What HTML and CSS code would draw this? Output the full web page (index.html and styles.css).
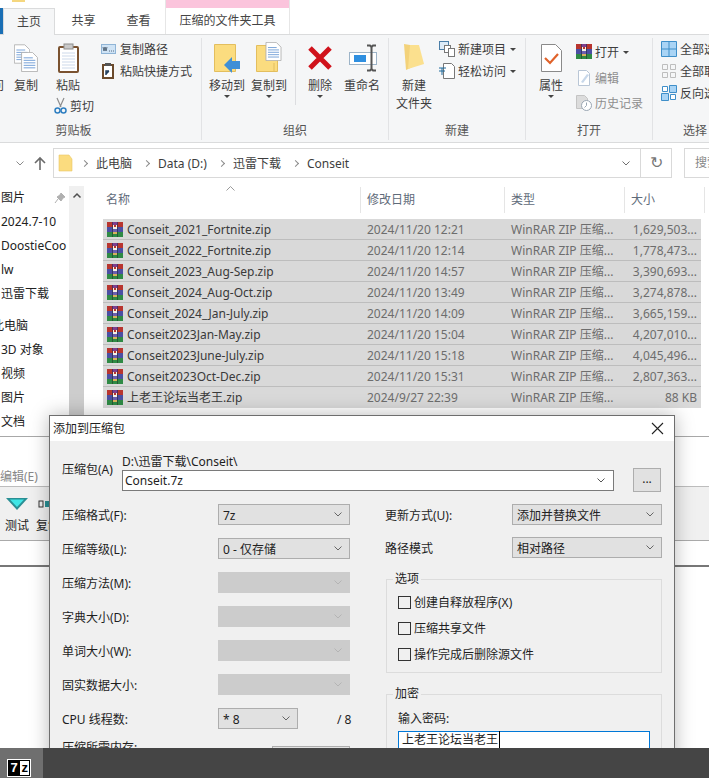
FILE: index.html
```html
<!DOCTYPE html>
<html lang="zh-CN">
<head>
    <meta charset="UTF-8">
    <title>添加到压缩包</title>
    <link rel="stylesheet" href="styles.css">
</head>
<body>
    <svg class="defs" width="0" height="0">
        <symbol id="rar" viewBox="0 0 16 16">
            <rect x="0" y="0" width="16" height="5" fill="#b8352f"/>
            <rect x="0" y="5" width="16" height="5" fill="#4b4fa3"/>
            <rect x="0" y="10" width="16" height="5" fill="#2f8a45"/>
            <rect x="5" y="0" width="6" height="3" fill="#7d3f8f"/>
            <rect x="5" y="0" width="1" height="15" fill="#1d1d1d" opacity=".45"/>
            <rect x="10" y="0" width="1" height="15" fill="#1d1d1d" opacity=".45"/>
            <path d="M6 3h1v2h2V3h1v4H6z" fill="#f6f1e4"/>
            <rect x="6" y="7" width="4" height="3" fill="#6a5fb0"/>
            <rect x="6" y="10" width="4" height="2" fill="#d9b15c"/>
        </symbol>
        <symbol id="page" viewBox="0 0 20 24">
            <path d="M.5.5h13l6 6v17H.5z" fill="#fff" stroke="#a9a9a9"/>
            <path d="M3 7h11M3 10h14M3 13h14M3 16h14M3 19h14" stroke="#5b8fd0"/>
        </symbol>
        <symbol id="chev" viewBox="0 0 8 5">
            <path d="M.5.5 4 4 7.500.5" fill="none" stroke="currentColor"/>
        </symbol>
    </svg>

    <div class="explorer">
        <div class="tabs">
            <div class="qat"></div>
            <div class="tab-file"></div>
            <div class="tab tab-active">主页</div>
            <div class="tab">共享</div>
            <div class="tab">查看</div>
            <div class="tab-context">
                <div class="tab-stripe"></div>
                <div class="tab-label">压缩的文件夹工具</div>
            </div>
        </div>

        <div class="ribbon">
            <div class="rb-group g-clip">
                <div class="rb-body">
                    <div class="big big-cut">
                        <div class="big-icon"></div>
                        <span>访问</span>
                    </div>
                    <div class="big big-copy">
                        <div class="big-icon">
                            <svg width="24" height="28" viewBox="0 0 24 28">
                                <use href="#page" x="0" y="0" width="16" height="20"/>
                                <use href="#page" x="7" y="8" width="17" height="20"/>
                            </svg>
                        </div>
                        <span>复制</span>
                    </div>
                    <div class="paste-col">
                        <div class="big big-paste">
                            <div class="big-icon">
                                <svg width="21" height="29" viewBox="0 0 21 29">
                                    <rect x="1" y="3" width="19" height="25" rx="1" fill="#fff" stroke="#7a5230" stroke-width="2"/>
                                    <rect x="6" y="0" width="9" height="5" fill="#c9c9c9" stroke="#8e8e8e"/>
                                    <path d="M4 9h13M4 12h13M4 15h13M4 18h13M4 21h13M4 24h13" stroke="#cdd9ea"/>
                                </svg>
                            </div>
                            <span>粘贴</span>
                        </div>
                        <div class="small">
                            <svg width="13" height="16" viewBox="0 0 13 16">
                                <path d="M3 0l4 9M10 0 6 9" stroke="#8d8d8d" stroke-width="1.200" fill="none"/>
                                <circle cx="3.500" cy="12.500" r="2.500" fill="none" stroke="#2f7fc1" stroke-width="1.500"/>
                                <circle cx="9.500" cy="12.500" r="2.500" fill="none" stroke="#2f7fc1" stroke-width="1.500"/>
                            </svg>
                            <span>剪切</span>
                        </div>
                    </div>
                    <div class="small-col small-col-a">
                        <div class="small">
                            <svg width="15" height="10" viewBox="0 0 15 10">
                                <rect x=".5" y=".5" width="14" height="9" fill="#cfe3f5" stroke="#8fb4d6"/>
                                <path d="M2 3l1 4 1-4 1 4 1-4M8 7h1M10 7h1M12 7h1" stroke="#3a4c60" fill="none" stroke-width=".8"/>
                            </svg>
                            <span>复制路径</span>
                        </div>
                        <div class="small">
                            <svg width="15" height="16" viewBox="0 0 15 16">
                                <rect x="2" y="2" width="10" height="13" fill="#fff" stroke="#6b4a2c" stroke-width="2"/>
                                <rect x="4" y="0" width="6" height="3" fill="#555"/>
                                <path d="M5 12V8h3M8 8l-3 3" stroke="#23405f" stroke-width="1.500" fill="none"/>
                            </svg>
                            <span>粘贴快捷方式</span>
                        </div>
                    </div>
                </div>
                <div class="rb-title">剪贴板</div>
            </div>

            <div class="rb-group g-org">
                <div class="rb-body">
                    <div class="big big-move">
                        <div class="big-icon">
                            <svg width="27" height="29" viewBox="0 0 27 29">
                                <path d="M.5.500h21v27H.5z" fill="#fbdc7f" stroke="#e3be5e"/>
                                <path d="M10 21l8-8v4h8v8h-8v4z" fill="#3f8fd6"/>
                            </svg>
                        </div>
                        <span>移动到</span>
                        <i class="caret"></i>
                    </div>
                    <div class="big big-copyto">
                        <div class="big-icon">
                            <svg width="27" height="28" viewBox="0 0 27 28">
                                <path d="M.5 1.500h21v26H.5z" fill="#fbdc7f" stroke="#e3be5e"/>
                                <path d="M18 19v8" stroke="#e3be5e"/>
                                <use href="#page" x="9" y="-2" width="17" height="19"/>
                            </svg>
                        </div>
                        <span>复制到</span>
                        <i class="caret"></i>
                    </div>
                    <div class="rb-sep"></div>
                    <div class="big big-del">
                        <div class="big-icon">
                            <svg width="26" height="26" viewBox="0 0 26 26">
                                <path d="M3 4l20 20M23 4 3 24" stroke="#d0121b" stroke-width="5"/>
                            </svg>
                        </div>
                        <span>删除</span>
                        <i class="caret"></i>
                    </div>
                    <div class="big big-ren">
                        <div class="big-icon">
                            <svg width="30" height="27" viewBox="0 0 30 27">
                                <rect x="2.500" y="8.500" width="27" height="12" fill="#fff" stroke="#9db4c8"/>
                                <rect x="7" y="11" width="12" height="7" fill="#2f8fe0"/>
                                <path d="M20 1.500h3l1.500 1.500 1.500-1.500h3M20 26.500h3l1.500-1.500 1.500 1.500h3M24.500 3v22" stroke="#555" stroke-width="2" fill="none"/>
                            </svg>
                        </div>
                        <span>重命名</span>
                    </div>
                </div>
                <div class="rb-title">组织</div>
            </div>

            <div class="rb-group g-new">
                <div class="rb-body">
                    <div class="big big-folder">
                        <div class="big-icon">
                            <svg width="20" height="27" viewBox="0 0 20 27">
                                <path d="M0 0l12 2 3 4v14l-13 6z" fill="#f3d27a"/>
                                <path d="M6 1h9l5 19-16 5z" fill="#fbe08e"/>
                            </svg>
                        </div>
                        <span>新建</span>
                        <span>文件夹</span>
                    </div>
                    <div class="small-col small-col-c">
                        <div class="small">
                            <svg width="16" height="16" viewBox="0 0 16 16">
                                <rect x=".5" y=".5" width="9" height="8" fill="#dcebf8" stroke="#4a7ea8"/>
                                <rect x="5.500" y="4.500" width="6" height="7" fill="#fff" stroke="#777"/>
                                <rect x="9.500" y="7.500" width="6" height="8" fill="#fff" stroke="#777"/>
                            </svg>
                            <span>新建项目</span>
                            <i class="caret caret-side"></i>
                        </div>
                        <div class="small">
                            <svg width="16" height="16" viewBox="0 0 16 16">
                                <path d="M4.500.5h8l3 3v12h-11z" fill="#fff" stroke="#777"/>
                                <path d="M0 5h7M0 8h6M3 5v7" stroke="#1f6a9c" fill="none"/>
                            </svg>
                            <span>轻松访问</span>
                            <i class="caret caret-side"></i>
                        </div>
                    </div>
                </div>
                <div class="rb-title">新建</div>
            </div>

            <div class="rb-group g-open">
                <div class="rb-body">
                    <div class="big big-prop">
                        <div class="big-icon">
                            <svg width="21" height="28" viewBox="0 0 21 28">
                                <path d="M.5.500h14l6 6v21H.5z" fill="#fff" stroke="#8a8a8a"/>
                                <path d="M4 14l5 5 8-9" fill="none" stroke="#e0622a" stroke-width="2.200"/>
                            </svg>
                        </div>
                        <span>属性</span>
                        <i class="caret"></i>
                    </div>
                    <div class="small-col small-col-d">
                        <div class="small">
                            <svg width="16" height="16"><use href="#rar"/></svg>
                            <span>打开</span>
                            <i class="caret caret-side"></i>
                        </div>
                        <div class="small small-off">
                            <svg width="16" height="16" viewBox="0 0 16 16">
                                <path d="M2.500.5h8l3 3v12h-11z" fill="#fff" stroke="#b9c6d6"/>
                                <path d="M5 12l6-8 2 1-6 8z" fill="#c8d8ea"/>
                            </svg>
                            <span>编辑</span>
                        </div>
                        <div class="small small-off">
                            <svg width="16" height="16" viewBox="0 0 16 16">
                                <path d="M.5.5h8l3 3v10h-11z" fill="#dcdcdc" stroke="#c4c4c4"/>
                                <circle cx="10.500" cy="10.500" r="5" fill="#fff" stroke="#9aa6b3"/>
                                <path d="M10.500 7.500v3l-2 2" stroke="#9aa6b3" fill="none"/>
                            </svg>
                            <span>历史记录</span>
                        </div>
                    </div>
                </div>
                <div class="rb-title">打开</div>
            </div>

            <div class="rb-group g-sel">
                <div class="rb-body">
                    <div class="small-col small-col-e">
                        <div class="small">
                            <svg width="16" height="16" viewBox="0 0 16 16">
                                <path d="M.5.5h15v15H.5zM8 0v16M0 8h16" fill="#a9d4f5" stroke="#3f8fc9"/>
                            </svg>
                            <span>全部选择</span>
                        </div>
                        <div class="small">
                            <svg width="16" height="16" viewBox="0 0 16 16">
                                <path d="M1.500 1.500h5v5h-5zM9.500 1.500h5v5h-5zM1.500 9.500h5v5h-5zM9.500 9.500h5v5h-5z" fill="none" stroke="#bdbdbd"/>
                            </svg>
                            <span>全部取消</span>
                        </div>
                        <div class="small">
                            <svg width="16" height="16" viewBox="0 0 16 16">
                                <path d="M8.500.5h7v7h-7zM.5 8.500h7v7h-7z" fill="#a9d4f5" stroke="#3f8fc9"/>
                                <path d="M1.500 1.500h5v5h-5zM9.500 9.500h5v5h-5z" fill="#fff" stroke="#3f8fc9"/>
                            </svg>
                            <span>反向选择</span>
                        </div>
                    </div>
                </div>
                <div class="rb-title">选择</div>
            </div>
        </div>

        <div class="address">
            <div class="nav">
                <svg class="nav-down" width="8" height="5" color="#8a8a8a"><use href="#chev"/></svg>
                <svg width="12" height="13" viewBox="0 0 12 13">
                    <path d="M6 13V1M1 6l5-5 5 5" fill="none" stroke="#6b6b6b" stroke-width="1.600"/>
                </svg>
            </div>
            <div class="addr-box">
                <svg class="addr-folder" width="13" height="16" viewBox="0 0 13 16">
                    <path d="M0 0h10l3 4v12H0z" fill="#fbdc7f" stroke="#e9c867" stroke-width=".6"/>
                </svg>
                <span class="crumb-sep"></span><span class="crumb">此电脑</span>
                <span class="crumb-sep"></span><span class="crumb">Data (D:)</span>
                <span class="crumb-sep"></span><span class="crumb">迅雷下载</span>
                <span class="crumb-sep"></span><span class="crumb">Conseit</span>
                <div class="addr-drop">
                    <svg width="8" height="5" color="#6f6f6f"><use href="#chev"/></svg>
                </div>
                <div class="addr-refresh">↻</div>
            </div>
            <div class="search-box">搜索</div>
        </div>

        <div class="main">
            <div class="sidebar">
                <div class="side-item">图片</div>
                <div class="side-item">2024.7-10</div>
                <div class="side-item">DoostieCoo</div>
                <div class="side-item">lw</div>
                <div class="side-item">迅雷下载</div>
                <div class="side-gap"></div>
                <div class="side-item side-cut">此电脑</div>
                <div class="side-item">3D 对象</div>
                <div class="side-item">视频</div>
                <div class="side-item">图片</div>
                <div class="side-item">文档</div>
                <svg class="pin" width="10" height="10" viewBox="0 0 10 10">
                    <path d="M6 0l4 4-2 1-2 3-4-4 3-2zM3 6 0 10" fill="#b0b0b0" stroke="#b0b0b0"/>
                </svg>
            </div>
            <div class="side-scroll">
                <div class="scroll-top">
                    <svg width="8" height="5" viewBox="0 0 8 5" color="#505050"><path d="M.5 4.500 4 1l3.500 3.500" fill="none" stroke="currentColor" stroke-width="1.500"/></svg>
                </div>
                <div class="scroll-thumb"></div>
            </div>
            <div class="files">
                <svg class="sort-mark" width="9" height="5" viewBox="0 0 9 5"><path d="M.5 4.500 4.500.5l4 4" fill="none" stroke="#9a9a9a"/></svg>
                <div class="file-head">
                    <div>名称</div>
                    <div>修改日期</div>
                    <div>类型</div>
                    <div>大小</div>
                </div>
                <div class="file-row"><div class="f-name"><svg width="16" height="16"><use href="#rar"/></svg>Conseit_2021_Fortnite.zip</div><div>2024/11/20 12:21</div><div>WinRAR ZIP 压缩...</div><div class="f-size">1,629,503...</div></div>
                <div class="file-row"><div class="f-name"><svg width="16" height="16"><use href="#rar"/></svg>Conseit_2022_Fortnite.zip</div><div>2024/11/20 12:14</div><div>WinRAR ZIP 压缩...</div><div class="f-size">1,778,473...</div></div>
                <div class="file-row"><div class="f-name"><svg width="16" height="16"><use href="#rar"/></svg>Conseit_2023_Aug-Sep.zip</div><div>2024/11/20 14:57</div><div>WinRAR ZIP 压缩...</div><div class="f-size">3,390,693...</div></div>
                <div class="file-row"><div class="f-name"><svg width="16" height="16"><use href="#rar"/></svg>Conseit_2024_Aug-Oct.zip</div><div>2024/11/20 13:49</div><div>WinRAR ZIP 压缩...</div><div class="f-size">3,274,878...</div></div>
                <div class="file-row"><div class="f-name"><svg width="16" height="16"><use href="#rar"/></svg>Conseit_2024_Jan-July.zip</div><div>2024/11/20 14:09</div><div>WinRAR ZIP 压缩...</div><div class="f-size">3,665,159...</div></div>
                <div class="file-row"><div class="f-name"><svg width="16" height="16"><use href="#rar"/></svg>Conseit2023Jan-May.zip</div><div>2024/11/20 15:04</div><div>WinRAR ZIP 压缩...</div><div class="f-size">4,207,010...</div></div>
                <div class="file-row"><div class="f-name"><svg width="16" height="16"><use href="#rar"/></svg>Conseit2023June-July.zip</div><div>2024/11/20 15:18</div><div>WinRAR ZIP 压缩...</div><div class="f-size">4,045,496...</div></div>
                <div class="file-row"><div class="f-name"><svg width="16" height="16"><use href="#rar"/></svg>Conseit2023Oct-Dec.zip</div><div>2024/11/20 15:31</div><div>WinRAR ZIP 压缩...</div><div class="f-size">2,807,363...</div></div>
                <div class="file-row"><div class="f-name"><svg width="16" height="16"><use href="#rar"/></svg>上老王论坛当老王.zip</div><div>2024/9/27 22:39</div><div>WinRAR ZIP 压缩...</div><div class="f-size">88 KB</div></div>
            </div>
        </div>
    </div>

    <div class="sevenzip">
        <div class="sz-menu">编辑(E)</div>
        <div class="sz-tools">
            <div class="sz-tool">
                <svg width="22" height="12" viewBox="0 0 22 12">
                    <path d="M0 0h22L11 12z" fill="#2a8f94"/>
                    <path d="M4 1.500h14L11 9z" fill="#3fe6e6"/>
                </svg>
                <span>测试</span>
            </div>
            <div class="sz-tool">
                <svg width="22" height="12" viewBox="0 0 22 12">
                    <rect x="2" y="3" width="4" height="6" fill="none" stroke="#333"/>
                    <rect x="8" y="3" width="8" height="6" fill="#2a8f94"/>
                </svg>
                <span>复制</span>
            </div>
        </div>
        <div class="sz-blank"></div>
    </div>

    <div class="taskbar">
        <div class="task-app">
            <div class="sz-logo"><b>7</b><span>z</span></div>
        </div>
    </div>

    <div class="dialog">
        <div class="dlg-title">
            <span>添加到压缩包</span>
            <svg width="13" height="13" viewBox="0 0 13 13">
                <path d="M1 1l11 11M12 1 1 12" stroke="#222" stroke-width="1.100"/>
            </svg>
        </div>
        <div class="dlg-body">
            <div class="archive">
                <div class="archive-label">压缩包(A)</div>
                <div class="archive-path">D:\迅雷下载\Conseit\</div>
                <div class="archive-input">
                    <span>Conseit.7z</span>
                    <svg width="8" height="5" color="#555"><use href="#chev"/></svg>
                </div>
                <div class="archive-btn">...</div>
            </div>

            <div class="dlg-cols">
                <div class="col-left">
                    <div class="opt"><label>压缩格式(F):</label><div class="combo"><span>7z</span><svg width="8" height="5"><use href="#chev"/></svg></div></div>
                    <div class="opt"><label>压缩等级(L):</label><div class="combo"><span>0 - 仅存储</span><svg width="8" height="5"><use href="#chev"/></svg></div></div>
                    <div class="opt"><label>压缩方法(M):</label><div class="combo combo-off"><span></span><svg width="8" height="5"><use href="#chev"/></svg></div></div>
                    <div class="opt"><label>字典大小(D):</label><div class="combo combo-off"><span></span><svg width="8" height="5"><use href="#chev"/></svg></div></div>
                    <div class="opt"><label>单词大小(W):</label><div class="combo combo-off"><span></span><svg width="8" height="5"><use href="#chev"/></svg></div></div>
                    <div class="opt"><label>固实数据大小:</label><div class="combo combo-off"><span></span><svg width="8" height="5"><use href="#chev"/></svg></div></div>
                    <div class="opt opt-cpu"><label>CPU 线程数:</label><div class="combo combo-cpu"><span>* 8</span><svg width="8" height="5"><use href="#chev"/></svg></div><div class="cpu-max">/ 8</div></div>
                    <div class="opt opt-mem"><label>压缩所需内存:</label><div class="combo combo-mem"></div></div>
                </div>
                <div class="col-right">
                    <div class="opt opt-r"><label>更新方式(U):</label><div class="combo combo-r"><span>添加并替换文件</span><svg width="8" height="5"><use href="#chev"/></svg></div></div>
                    <div class="opt opt-r"><label>路径模式</label><div class="combo combo-r"><span>相对路径</span><svg width="8" height="5"><use href="#chev"/></svg></div></div>
                    <fieldset class="grp grp-opts">
                        <legend>选项</legend>
                        <div class="check"><i></i><span>创建自释放程序(X)</span></div>
                        <div class="check"><i></i><span>压缩共享文件</span></div>
                        <div class="check"><i></i><span>操作完成后删除源文件</span></div>
                    </fieldset>
                    <fieldset class="grp grp-pass">
                        <legend>加密</legend>
                        <div class="pass-label">输入密码:</div>
                        <div class="pass-input"><span>上老王论坛当老王</span></div>
                    </fieldset>
                </div>
            </div>
        </div>
    </div>
</body>
</html>
```

FILE: styles.css
```css
* {
    box-sizing: border-box;
}

html, body {
    margin: 0;
    height: 778px;
    overflow: hidden;
}

body {
    position: relative;
    background: #fff;
    font-family: "Noto Sans", "Noto Sans CJK SC", sans-serif;
    font-size: 12px;
    line-height: 16px;
    color: #333;
}

.defs {
    display: block;
    height: 0;
}

svg {
    display: block;
    flex: none;
    overflow: visible;
}

/* explorer window */
.explorer {
    height: 436px;
    overflow: hidden;
}

.tabs {
    position: relative;
    display: flex;
    height: 34px;
    align-items: flex-end;
}

.qat {
    position: absolute;
    top: 0;
    left: 12px;
    width: 13px;
    height: 2px;
    background: #f5d77f;
}

.tab-file {
    width: 3px;
    height: 26px;
    background: #1a6fb5;
}

.tab {
    width: 55px;
    height: 26px;
    text-align: center;
    line-height: 25px;
    color: #444;
}

.tab-active {
    width: 52px;
    margin-right: 1px;
    background: #f5f6f7;
    border: 1px solid #dadbdc;
    border-bottom: 0;
    height: 27px;
    margin-bottom: -1px;
    position: relative;
}

.tab-context {
    width: 125px;
    height: 34px;
    margin-left: -1px;
    border-left: 1px solid #e6e6e6;
    border-right: 1px solid #e6e6e6;
    text-align: center;
    color: #444;
}

.tab-stripe {
    height: 8px;
    background: #fbc4dc;
}

.tab-label {
    line-height: 25px;
}

.ribbon {
    display: flex;
    height: 109px;
    background: #f5f6f7;
    border-top: 1px solid #dadbdc;
    border-bottom: 1px solid #dadbdc;
}

.rb-group {
    display: flex;
    flex: none;
    flex-direction: column;
    margin: 3px 0 2px;
    border-right: 1px solid #e2e3e5;
}

.rb-body {
    display: flex;
    flex: 1;
    padding-top: 6px;
}

.rb-title {
    height: 17px;
    text-align: center;
    color: #555;
}

.g-clip { width: 256px; margin-left: -54px; }
.g-org { width: 187px; }
.g-new { width: 137px; }
.g-open { width: 127px; }
.g-sel { width: 84px; border-right: 0; }

.big {
    display: flex;
    flex: none;
    flex-direction: column;
    align-items: center;
    color: #3d3d3d;
}

.big-icon {
    height: 28px;
    margin-bottom: 6px;
}

.caret {
    display: block;
    width: 0;
    height: 0;
    margin-top: 1px;
    border: 3px solid transparent;
    border-top-color: #444;
    border-bottom: 0;
}

.caret-side {
    margin: 0 0 0 1px;
}

.big-cut { width: 24px; margin-left: 34px; }
.big-copy { width: 24px; margin-left: 10px; }
.big-move { width: 36px; margin-left: 7px; }
.big-copyto { width: 36px; margin-left: 6px; }
.big-del { width: 26px; margin-left: 11px; }
.big-ren { width: 36px; margin-left: 11px; }
.big-folder { width: 36px; margin-left: 7px; }
.big-prop { width: 24px; margin-left: 13px; }

.big-folder span + span {
    margin-top: 2px;
}

.rb-sep {
    width: 1px;
    height: 55px;
    margin: 6px 0 0 8px;
    background: #dcdde0;
}

.paste-col {
    width: 40px;
    margin-left: 16px;
}

.big-paste {
    width: 24px;
    margin: 0 0 4px 2px;
}

.small {
    display: flex;
    align-items: center;
    gap: 3px;
    height: 16px;
    color: #3d3d3d;
    white-space: nowrap;
}

.small span {
    padding-top: 2px;
}

.small-off {
    color: #8e8e8e;
}

.small-col {
    display: flex;
    flex-direction: column;
    margin-top: -3px;
    gap: 6px;
}

.small-col-a { margin-left: 7px; }
.small-col-a .small { gap: 4px; }
.small-col-c { margin-left: 7px; }
.small-col-d { margin-left: 13px; margin-top: 0; gap: 9.5px; }
.small-col-e { margin-left: 8px; }

/* address bar */
.address {
    display: flex;
    height: 43px;
    padding-top: 5px;
    background: #fff;
}

.nav {
    display: flex;
    flex: none;
    width: 53px;
    height: 30px;
    align-items: center;
    gap: 10px;
    padding-left: 16px;
}

.addr-box {
    display: flex;
    flex: none;
    width: 619px;
    height: 30px;
    align-items: center;
    padding-left: 5px;
    border: 1px solid #d9d9d9;
    color: #3d3d3d;
}

.addr-folder {
    margin-right: -2px;
}

.crumb {
    padding-top: 2px;
}

.crumb-sep {
    width: 5px;
    height: 5px;
    margin: 0 9px 0 12px;
    border-top: 1px solid #8a8a8a;
    border-right: 1px solid #8a8a8a;
    transform: rotate(45deg);
}

.addr-drop {
    display: flex;
    height: 28px;
    align-items: center;
    margin-left: auto;
    padding-right: 10px;
}

.addr-refresh {
    width: 31px;
    height: 28px;
    border-left: 1px solid #d9d9d9;
    text-align: center;
    line-height: 26px;
    font-size: 16px;
    color: #777;
}

.search-box {
    flex: none;
    width: 60px;
    height: 30px;
    margin-left: 12px;
    padding-left: 10px;
    border: 1px solid #d9d9d9;
    line-height: 28px;
    color: #888;
}

.main {
    display: flex;
    height: 250px;
}

.sidebar {
    position: relative;
    width: 69px;
    padding-top: 4px;
    overflow: hidden;
    white-space: nowrap;
}

.side-item {
    height: 24px;
    padding-left: 1px;
    color: #222;
}

.side-gap {
    height: 8px;
}

.side-cut {
    margin-left: -9px;
}

.pin {
    position: absolute;
    top: 7px;
    left: 55px;
}

.side-scroll {
    display: flex;
    flex-direction: column;
    width: 15px;
    background: #f0f0f0;
}

.scroll-top {
    display: flex;
    justify-content: center;
    height: 104px;
    padding-top: 7px;
}

.scroll-thumb {
    flex: 1;
    background: #cdcdcd;
}

.files {
    position: relative;
    flex: 1;
    padding-left: 19px;
}

.sort-mark {
    position: absolute;
    top: 0;
    left: 142px;
}

.file-head,
.file-row {
    display: grid;
}

.file-head {
    grid-template-columns: 258px 144px 120px 80px;
    height: 33px;
    padding-top: 1px;
    color: #5f6b7a;
}

.file-head div {
    height: 26px;
    padding: 5px 0 0 6px;
    border-right: 1px solid #e5e5e5;
}

.file-head div:first-child {
    padding-left: 3px;
}

.file-row {
    grid-template-columns: 260px 144px 120px 74px;
    height: 21px;
    align-items: center;
    width: 598px;
    padding-top: 1px;
    background: #d9d9d9;
    border-bottom: 1px solid #bdbdbd;
    color: #6d6d6d;
    white-space: nowrap;
}

.file-row:last-child {
    border-bottom: 0;
}

.file-row div {
    padding-left: 4px;
}

.file-row .f-name {
    display: flex;
    align-items: center;
    gap: 4px;
    color: #3a3a3a;
}

.file-row .f-size {
    padding: 0 4px 0 0;
    text-align: right;
}

/* 7-zip main window behind the dialog */
.sevenzip {
    height: 312px;
    border-top: 1px solid #a8a8a8;
}

.sz-menu {
    height: 49px;
    padding-top: 32px;
    color: #888;
}

.sz-tools {
    display: flex;
    height: 55px;
    gap: 7px;
    padding: 11px 0 0 5px;
    background: #f0f0f0;
    border-top: 1px solid #bdbdbd;
    border-bottom: 1px solid #aaa;
}

.sz-tool {
    display: flex;
    flex-direction: column;
    align-items: center;
    gap: 8px;
    width: 24px;
    color: #222;
}

.sz-blank {
    height: 26px;
    border-bottom: 2px solid #777;
}

.taskbar {
    position: relative;
    z-index: 2;
    height: 30px;
    background: #454545;
}

.task-app {
    display: flex;
    width: 43px;
    height: 30px;
    padding: 11px 0 0 7px;
    background: #6f6f6f;
}

.sz-logo {
    display: flex;
    width: 24px;
    height: 18px;
    padding: 1px;
    gap: 1px;
    background: #000;
    border: 1px solid #fff;
    font-family: "Liberation Sans", sans-serif;
    font-weight: bold;
    font-size: 13px;
    line-height: 14px;
}

.sz-logo b {
    width: 11px;
    text-align: center;
    color: #fff;
}

.sz-logo span {
    width: 9px;
    background: #fff;
    color: #000;
    text-align: center;
}

/* add to archive dialog */
.dialog {
    position: absolute;
    left: 49px;
    top: 415px;
    z-index: 1;
    width: 626px;
    height: 420px;
    background: #f0f0f0;
    border: 1px solid #6e6e6e;
    box-shadow: 0 0 18px rgba(0, 0, 0, .28);
    color: #1e1e1e;
}

.dlg-title {
    display: flex;
    height: 25px;
    align-items: center;
    justify-content: space-between;
    padding: 0 10px 0 3px;
    background: #fff;
}

.dlg-body {
    padding: 13px 12px;
}

.archive {
    display: grid;
    grid-template-columns: 60px 492px 19px 28px;
    grid-template-rows: 16px 21px;
}

.archive-label {
    grid-row: 1 / 3;
    align-self: center;
    margin-top: -6px;
}

.archive-path {
    grid-column: 2 / 5;
}

.archive-input {
    display: flex;
    align-items: center;
    justify-content: space-between;
    grid-column: 2;
    padding: 0 8px 0 2px;
    background: #fff;
    border: 1px solid #7a7a7a;
}

.archive-btn {
    grid-column: 4;
    height: 24px;
    margin-top: -2px;
    background: #e1e1e1;
    border: 1px solid #adadad;
    text-align: center;
    line-height: 20px;
}

.dlg-cols {
    display: grid;
    grid-template-columns: 288px 276px;
    column-gap: 36px;
    margin-top: 13px;
}

.opt {
    display: flex;
    align-items: center;
    justify-content: space-between;
    height: 21px;
    margin-bottom: 13px;
}

.opt label,
.combo span {
    padding-top: 2px;
}

.opt-r {
    margin-bottom: 12px;
}

.opt-r label {
    margin-left: -1px;
}

.opt-r + .grp {
    margin-top: 13px;
}

.combo {
    display: flex;
    align-items: center;
    justify-content: space-between;
    width: 132px;
    height: 21px;
    padding: 0 7px 0 4px;
    background: #e1e1e1;
    border: 1px solid #adadad;
    color: #222;
}

.combo svg {
    color: #666;
}

.combo-r {
    width: 150px;
}

.combo-off {
    background: #ccc;
    border-color: #ccc;
}

.combo-off svg {
    color: #b4b4b4;
}

.combo-cpu {
    width: 80px;
    margin-left: auto;
}

.cpu-max {
    width: 52px;
    padding-left: 39px;
    white-space: nowrap;
    padding-top: 2px;
}

.opt-mem {
    align-items: flex-start;
    margin-top: 17px;
}

.opt-mem label {
    margin-top: -8px;
}

.combo-mem {
    width: 78px;
}

.grp {
    margin: 0 0 13px;
    padding: 0 0 11px 11px;
    border: 1px solid #dcdcdc;
    min-width: 0;
}

.grp legend {
    margin-left: -5px;
    padding: 0 2px;
    line-height: 16px;
}

.grp-opts {
    padding-top: 8px;
}

.check {
    display: flex;
    align-items: center;
    gap: 3px;
    height: 14px;
    margin-bottom: 12px;
}

.check:last-child {
    margin-bottom: 0;
}

.check span {
    padding-top: 2px;
}

.check i {
    width: 13px;
    height: 13px;
    border: 1px solid #333;
}

.grp-pass {
    padding-top: 9px;
}

.pass-label {
    height: 16px;
}

.pass-input {
    width: 252px;
    height: 22px;
    margin-top: 4px;
    padding-left: 3px;
    background: #fff;
    border: 1px solid #0078d7;
    color: #222;
}

.pass-input span {
    padding-right: 1px;
    border-right: 1px solid #000;
}
```
